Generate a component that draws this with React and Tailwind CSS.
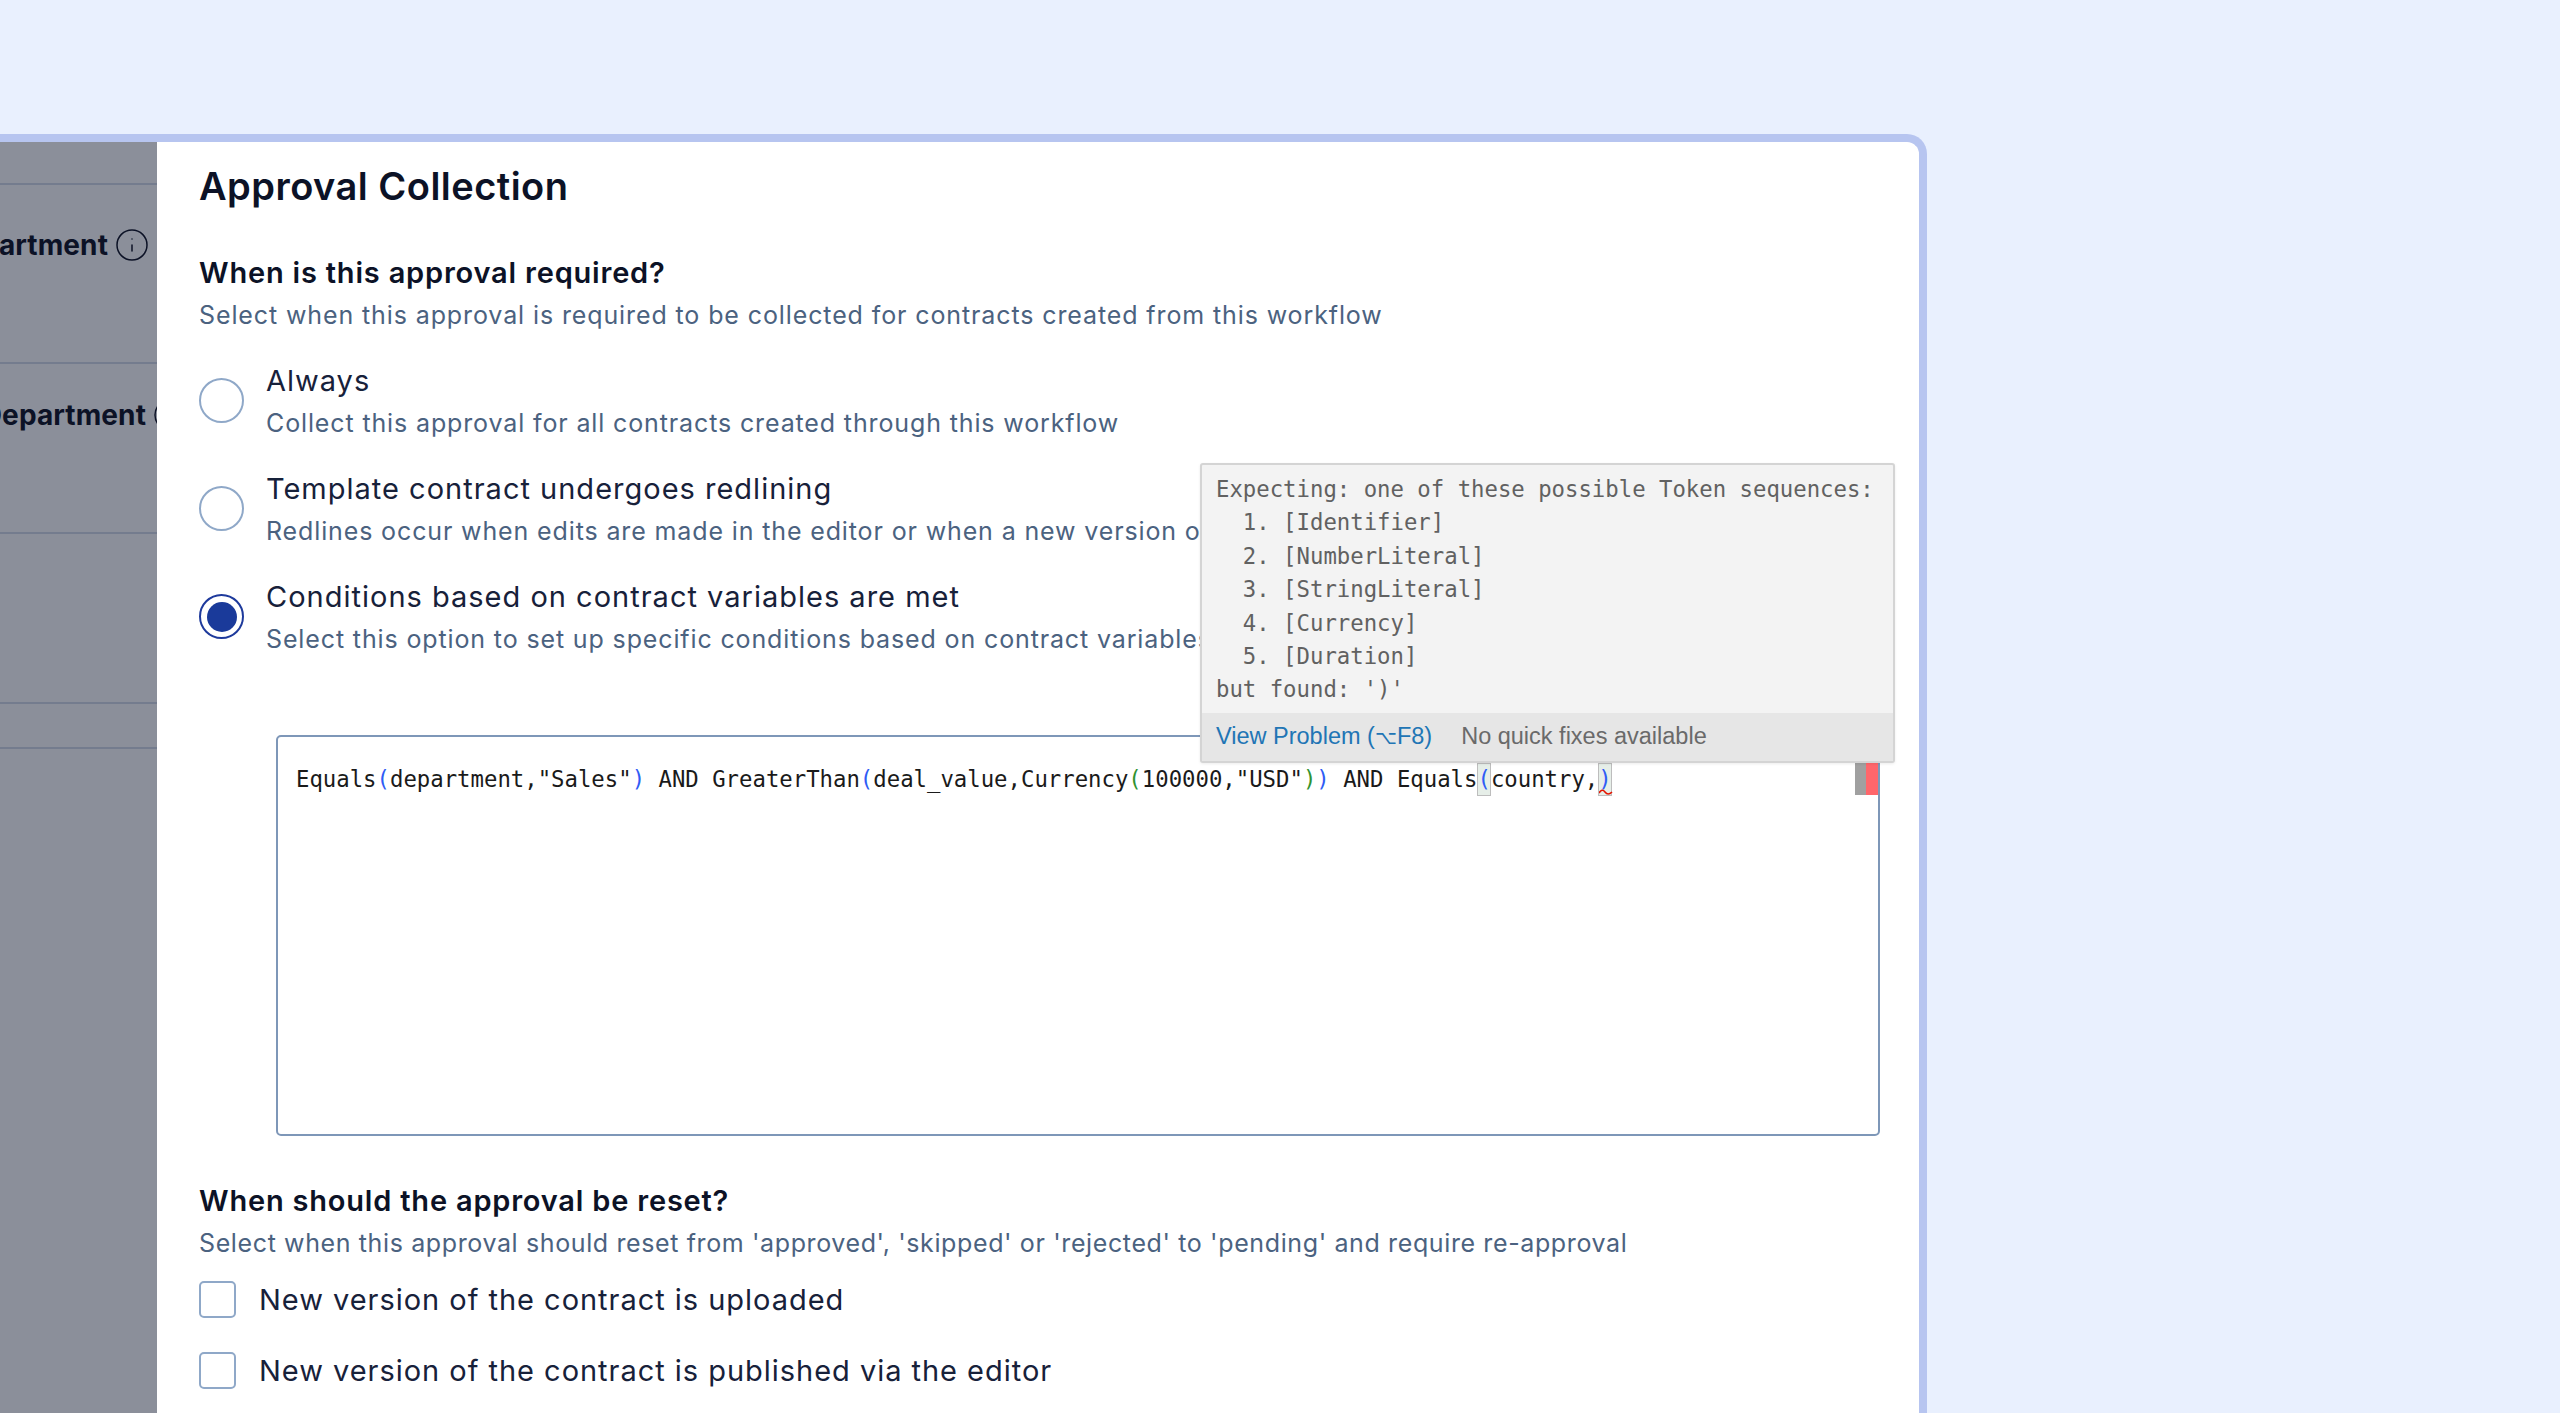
import React from "react";
import { Info } from "lucide-react";

const B = ({ c = "text-[#2f5cf5]", children }) => <span className={c}>{children}</span>;

const sans = "font-['Inter','Noto_Sans',sans-serif]";

function Radio({ checked, label, sub }) {
  return (
    <div className="flex items-center h-[77px] gap-[22px]">
      {checked ? (
        <div className="w-[45px] h-[45px] shrink-0 rounded-full border-2 border-[#1e3a9c] bg-white flex items-center justify-center">
          <div className="w-[30px] h-[30px] rounded-full bg-[#1a3a9a]" />
        </div>
      ) : (
        <div className="w-[45px] h-[45px] shrink-0 rounded-full border-2 border-[#8fa8c8] bg-white" />
      )}
      <div className="whitespace-nowrap pt-[1px]">
        <div className="text-[29px] leading-[36px] text-[#17213a] tracking-[1px]">{label}</div>
        <div className="text-[25px] leading-[32px] mt-[8px] text-[#4b6280] tracking-[0.87px]">{sub}</div>
      </div>
    </div>
  );
}

function Check({ label }) {
  return (
    <div className="flex items-center h-[37px] gap-[23px]">
      <div className="w-[37px] h-[37px] shrink-0 rounded-[5px] border-2 border-[#8fa8c8] bg-white" />
      <div className="text-[29px] leading-[36px] text-[#17213a] whitespace-nowrap tracking-[0.97px]">{label}</div>
    </div>
  );
}

function SideRow({ height, pt, mr, last }) {
  return (
    <div className={"shrink-0 flex justify-end items-start " + (last ? "" : "border-b-2 border-[#747c8e]")} style={{ height, paddingTop: pt }}>
      {pt != null && (
        <div className="flex items-center gap-[6px] shrink-0 whitespace-nowrap" style={{ marginRight: mr }}>
          <span className="text-[28px] leading-[36px] font-bold text-[#0c1226] tracking-[0.1px]">Department</span>
          <Info className="w-[36px] h-[36px] text-[#0c1226] shrink-0" strokeWidth={1} />
        </div>
      )}
    </div>
  );
}

export default function App() {
  return (
    <div className={"h-screen w-full overflow-hidden bg-[#e9f0fe] pt-[134px] " + sans}>
      <div className="w-[1927px] h-[1279px] border-t-8 border-r-8 border-[#b7c5f0] rounded-tr-[20px] flex overflow-hidden bg-white">
        <div className="w-[157px] shrink-0 bg-[#8b8f9a] flex flex-col overflow-hidden">
          <SideRow height={43} />
          <SideRow height={179} pt={42} mr={7} />
          <SideRow height={170} pt={33} mr={-31} />
          <SideRow height={170} />
          <SideRow height={45} />
        </div>
        <div className="flex-1 relative pl-[42px] pt-[22px]">
          <h1 className="text-[38px] leading-[44px] font-semibold text-[#0c1226] tracking-[0.47px]">Approval Collection</h1>
          <h2 className="mt-[47px] text-[29px] leading-[36px] font-semibold text-[#0c1226] tracking-[0.8px]">When is this approval required?</h2>
          <p className="mt-[8px] text-[25px] leading-[32px] text-[#4b6280] whitespace-nowrap tracking-[0.89px]">Select when this approval is required to be collected for contracts created from this workflow</p>

          <div className="mt-[31px] flex flex-col gap-[31px]">
            <Radio label="Always" sub="Collect this approval for all contracts created through this workflow" />
            <Radio label="Template contract undergoes redlining" sub="Redlines occur when edits are made in the editor or when a new version of the contract is uploaded" />
            <Radio checked label="Conditions based on contract variables are met" sub="Select this option to set up specific conditions based on contract variables" />
          </div>

          <div className="relative mt-[80px] ml-[77px] w-[1604px] h-[401px] border-2 border-[#7e97b8] rounded-[5px] bg-white pl-[18px] pt-[26px]">
            <div className="font-['DejaVu_Sans_Mono',monospace] text-[22.3px] leading-[33px] text-[#1a1a1a] whitespace-pre">
              Equals<B>(</B>department,"Sales"<B>)</B> AND GreaterThan<B>(</B>deal_value,Currency<B c="text-[#319331]">(</B>100000,"USD"<B c="text-[#319331]">)</B><B>)</B> AND Equals<span className="inline-block h-[33px] align-top bg-[#e6eee8] shadow-[inset_0_0_0_1px_#bdbdbd] text-[#2f5cf5]">(</span>country,<span className="inline-block h-[33px] align-top bg-[#e6eee8] shadow-[inset_0_0_0_1px_#bdbdbd] text-[#2f5cf5]">)</span>
            </div>
            <svg className="absolute left-[1321px] top-[52px]" width="14" height="6" viewBox="0 0 14 6">
              <path d="M0 4 Q3 -1 6 3 T13 3" fill="none" stroke="#e51400" strokeWidth="1.6" />
            </svg>
            <div className="absolute right-0 top-[25px] h-[33px] flex">
              <div className="w-[11px] bg-[#a0a0a0]" />
              <div className="w-[12px] bg-[#ff666b]" />
            </div>
          </div>

          <h2 className="mt-[47px] text-[29px] leading-[36px] font-semibold text-[#0c1226] tracking-[0.8px]">When should the approval be reset?</h2>
          <p className="mt-[8px] text-[25px] leading-[32px] text-[#4b6280] whitespace-nowrap tracking-[0.62px]">Select when this approval should reset from 'approved', 'skipped' or 'rejected' to 'pending' and require re-approval</p>
          <div className="mt-[22px] flex flex-col gap-[34px]">
            <Check label="New version of the contract is uploaded" />
            <Check label="New version of the contract is published via the editor" />
          </div>

          <div className="absolute left-[1043px] top-[321px] w-[695px] h-[300px] border-2 border-[#d4d4d4] rounded-[3px] bg-[#f3f3f3] flex flex-col overflow-hidden shadow-[0_1px_3px_rgba(0,0,0,0.08)]">
            <div className="flex-1 pl-[14px] pt-[8px] font-['DejaVu_Sans_Mono',monospace] text-[22.3px] leading-[33.4px] text-[#616161] whitespace-pre">
              {"Expecting: one of these possible Token sequences:\n  1. [Identifier]\n  2. [NumberLiteral]\n  3. [StringLiteral]\n  4. [Currency]\n  5. [Duration]\nbut found: ')'"}
            </div>
            <div className="h-[48px] bg-[#e6e6e6] flex items-center pl-[14px] pb-[1px] gap-[29px] font-['Liberation_Sans',sans-serif] text-[23.5px] whitespace-nowrap">
              <span className="text-[#2175b5]">View Problem (<span className="text-[19px]">⌥</span>F8)</span>
              <span className="text-[#6a6a6a]">No quick fixes available</span>
            </div>
          </div>
        </div>
      </div>
    </div>
  );
}
